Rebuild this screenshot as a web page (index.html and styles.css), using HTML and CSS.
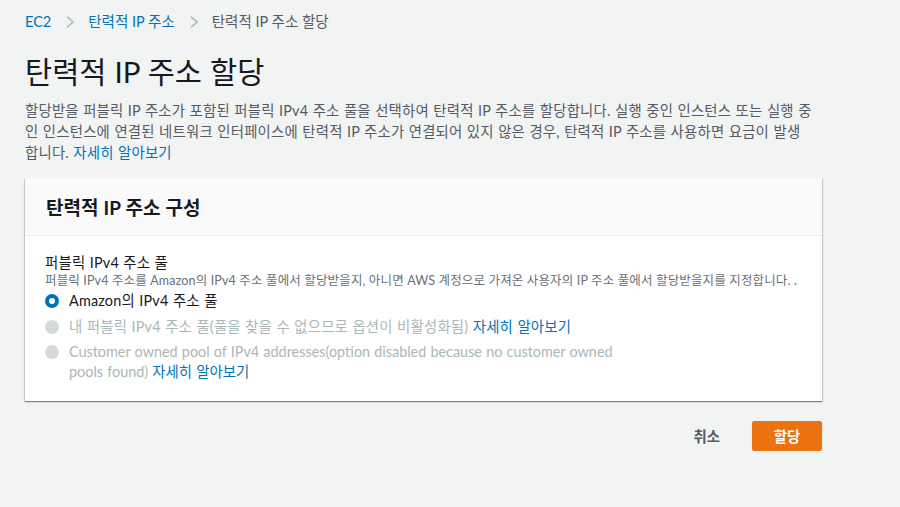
FILE: index.html
```html
<!DOCTYPE html>
<html lang="ko">
<head>
<meta charset="utf-8">
<link rel="stylesheet" href="styles.css">
</head>
<body>
<div class="page">
  <nav class="crumbs">
    <a class="crumb-link" href="#">EC2</a>
    <svg class="chev" width="10" height="14" viewBox="0 0 10 14"><path d="M2 1.5 L8 7 L2 12.5" fill="none" stroke="#aab7b8" stroke-width="1.6"/></svg>
    <a class="crumb-link" href="#">탄력적 IP 주소</a>
    <svg class="chev" width="10" height="14" viewBox="0 0 10 14"><path d="M2 1.5 L8 7 L2 12.5" fill="none" stroke="#aab7b8" stroke-width="1.6"/></svg>
    <span class="crumb-current">탄력적 IP 주소 할당</span>
  </nav>
  <h1 class="title">탄력적 IP 주소 할당</h1>
  <p class="desc">할당받을 퍼블릭 IP 주소가 포함된 퍼블릭 IPv4 주소 풀을 선택하여 탄력적 IP 주소를 할당합니다. 실행 중인 인스턴스 또는 실행 중인 인스턴스에 연결된 네트워크 인터페이스에 탄력적 IP 주소가 연결되어 있지 않은 경우, 탄력적 IP 주소를 사용하면 요금이 발생합니다. <a class="link" href="#">자세히 알아보기</a></p>

  <section class="card">
    <div class="card-head">탄력적 IP 주소 구성</div>
    <div class="card-body">
      <div class="field-label">퍼블릭 IPv4 주소 풀</div>
      <div class="field-desc">퍼블릭 IPv4 주소를 Amazon의 IPv4 주소 풀에서 할당받을지, 아니면 AWS 계정으로 가져온 사용자의 IP 주소 풀에서 할당받을지를 지정합니다. .</div>
      <div class="radios">
        <div class="radio-row">
          <span class="radio checked"></span>
          <span class="radio-text">Amazon의 IPv4 주소 풀</span>
        </div>
        <div class="radio-row">
          <span class="radio disabled"></span>
          <span class="radio-text muted">내 퍼블릭 IPv4 주소 풀(풀을 찾을 수 없으므로 옵션이 비활성화됨) <a class="link" href="#">자세히 알아보기</a></span>
        </div>
        <div class="radio-row">
          <span class="radio disabled"></span>
          <span class="radio-text muted wrap">Customer owned pool of IPv4 addresses(option disabled because no customer owned pools found) <a class="link" href="#">자세히 알아보기</a></span>
        </div>
      </div>
    </div>
  </section>

  <div class="actions">
    <button class="btn-cancel">취소</button>
    <button class="btn-primary">할당</button>
  </div>
</div>
</body>
</html>
```

FILE: styles.css
```css
* { box-sizing: border-box; }
html, body { margin: 0; padding: 0; }
body {
  background: #f2f3f3;
  font-family: "Lato", "Noto Sans CJK KR", sans-serif;
  color: #16191f;
  font-size: 14.4px;
  letter-spacing: 0.2px;
  word-spacing: 0.5px;
}
.page {
  width: 825px;
  padding: 12px 0 0 25px;
}
.crumbs {
  display: flex;
  align-items: center;
  height: 20px;
  font-size: 14.5px;
  line-height: 20px;
  letter-spacing: 0;
  word-spacing: 0;
}
.crumb-link { color: #0073bb; text-decoration: none; }
.crumb-current { color: #545b64; }
.chev { margin: 0 13px 0 14px; }
.title {
  margin: 22px 0 0;
  font-size: 29.5px;
  font-weight: 400;
  line-height: 36px;
  letter-spacing: 0;
  color: #16191f;
}
.desc {
  margin: 10px 0 0;
  width: 787px;
  line-height: 21px;
  color: #545b64;
}
.link { color: #0073bb; text-decoration: none; }
.card {
  margin-top: 15px;
  width: 797px;
  background: #fff;
  box-shadow: 0 1px 1px 0 rgba(0, 28, 36, 0.3), 1px 1px 1px 0 rgba(0, 28, 36, 0.15), -1px 1px 1px 0 rgba(0, 28, 36, 0.15);
}
.card-head {
  background: #fafafa;
  border-bottom: 1px solid #eaeded;
  height: 58px;
  padding: 0 21px;
  display: flex;
  align-items: center;
  font-size: 19px;
  font-weight: 700;
  letter-spacing: 0;
  color: #16191f;
}
.card-body {
  padding: 18px 20px 13px;
}
.field-label {
  line-height: 18px;
  color: #16191f;
}
.field-desc {
  font-size: 12.5px;
  line-height: 18px;
  letter-spacing: 0.15px;
  word-spacing: 0;
  color: #687078;
}
.radios { margin-top: 1px; }
.radio-row {
  display: flex;
  align-items: flex-start;
  margin-bottom: 5.5px;
}
.radio {
  flex: none;
  width: 14px;
  height: 14px;
  border-radius: 50%;
  margin: 3px 10px 0 0;
}
.radio.checked {
  border: 4px solid #0073bb;
  background: #fff;
}
.radio.disabled { background: #d5dbdb; }
.radio-text {
  line-height: 20px;
  color: #16191f;
}
.radio-text.muted { color: #aab7b8; }
.radio-text.wrap {
  max-width: 560px;
  letter-spacing: 0;
  word-break: keep-all;
}
.actions {
  width: 797px;
  display: flex;
  justify-content: flex-end;
  align-items: center;
  margin-top: 20px;
}
.btn-cancel {
  border: none;
  background: transparent;
  font-family: inherit;
  font-size: 14.4px;
  font-weight: 700;
  color: #545b64;
  padding: 0 20px;
  height: 30px;
  margin-right: 12px;
}
.btn-primary {
  border: 1px solid #ec7211;
  background: #ec7211;
  color: #fff;
  font-family: inherit;
  font-size: 14.4px;
  font-weight: 700;
  width: 70px;
  height: 30px;
  border-radius: 2px;
  padding: 0;
}
```
